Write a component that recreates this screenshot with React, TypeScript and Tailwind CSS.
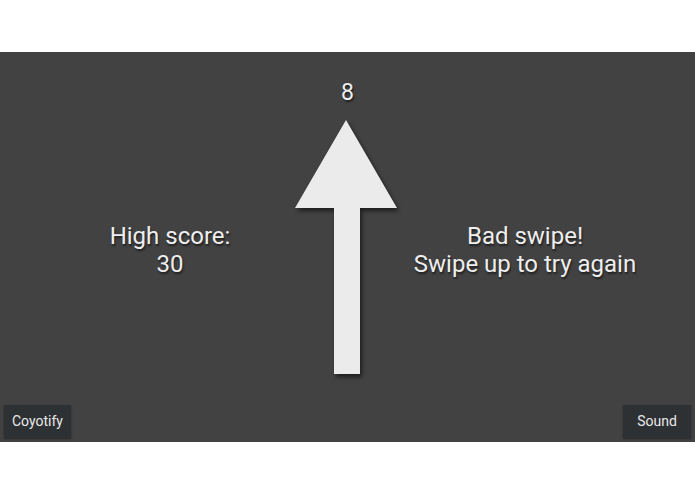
import React from 'react';

const shadow = '[text-shadow:1px_2px_2px_rgba(0,0,0,0.55)]';

const UpArrow: React.FC = () => (
  <svg
    width="120"
    height="270"
    viewBox="0 0 120 270"
    className="absolute left-[288px] top-[62px]"
    style={{ filter: 'drop-shadow(2px 3px 2px rgba(0,0,0,0.55))' }}
  >
    <polygon
      points="58,6 109,94 72,94 72,260 46,260 46,94 7,94"
      fill="#ebebeb"
    />
  </svg>
);

export default function App() {
  return (
    <div className="w-[695px] h-[494px] bg-white pt-[52px]" style={{ fontFamily: 'Roboto, "Liberation Sans", sans-serif' }}>
      <div className="relative h-[390px] bg-[#424242] flex flex-col">
        {/* current score */}
        <div className={`h-[78px] pt-[27px] text-center text-[23px] leading-[28px] text-[#eeeeee] ${shadow}`}>8</div>

        <UpArrow />

        <div className="flex-1 flex items-center">
          <div className={`w-[340px] text-center text-[24px] leading-[28px] text-[#eeeeee] pt-[5px] ${shadow}`}>
            <div>High score:</div>
            <div>30</div>
          </div>
          <div className="w-[15px]" />
          <div className={`w-[340px] text-center text-[24px] leading-[28px] text-[#eeeeee] pt-[5px] ${shadow}`}>
            <div>Bad swipe!</div>
            <div>Swipe up to try again</div>
          </div>
        </div>

        {/* bottom buttons */}
        <div className="h-[78px] flex items-end justify-between px-[4px] pb-[4px]">
          <button className="h-[33px] w-[67px] bg-[#2e3134] text-[14px] text-[#e8e8e8] shadow-[0_1px_2px_rgba(0,0,0,0.4)]">
            Coyotify
          </button>
          <button className="h-[33px] w-[68px] bg-[#2e3134] text-[14px] text-[#e8e8e8] shadow-[0_1px_2px_rgba(0,0,0,0.4)]">
            Sound
          </button>
        </div>
      </div>
    </div>
  );
}
